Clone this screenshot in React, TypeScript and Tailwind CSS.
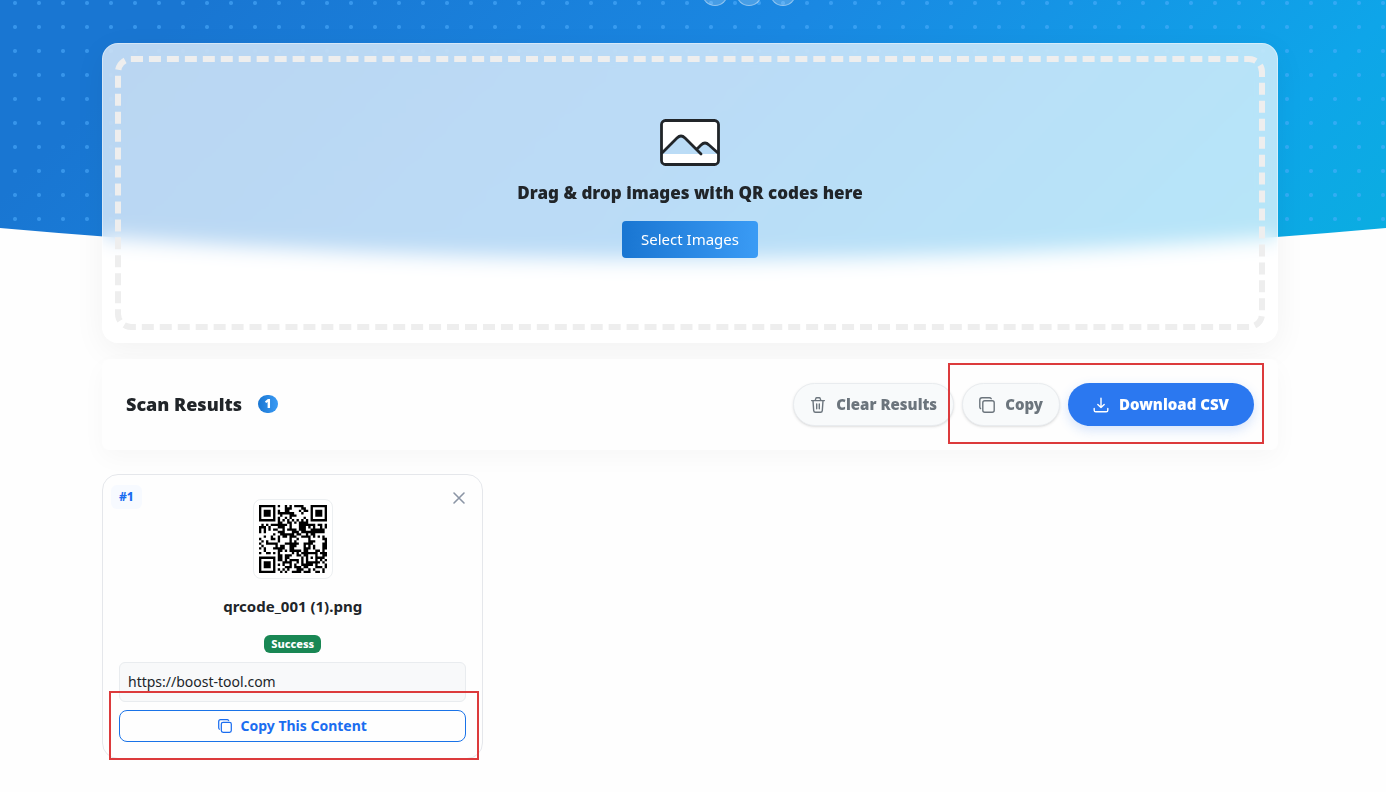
import React from 'react';

const QR_SIZE = 29;
const QR_MASK = 7;
const DATA_PER_BLOCK = 17;
const ECC_PER_BLOCK = 18;

const gfMul = (a: number, b: number) => {
    let r = 0;
    for (let i = 7; i >= 0; i--) {
        r = (r << 1) ^ ((r >> 7) * 0x11d);
        r ^= ((b >> i) & 1) * a;
    }
    return r;
};

const eccFor = (data: number[]) => {
    const gen: number[] = new Array(ECC_PER_BLOCK).fill(0);
    gen[ECC_PER_BLOCK - 1] = 1;
    let root = 1;
    for (let i = 0; i < ECC_PER_BLOCK; i++) {
        for (let j = 0; j < ECC_PER_BLOCK; j++) {
            gen[j] = gfMul(gen[j], root);
            if (j + 1 < ECC_PER_BLOCK) gen[j] ^= gen[j + 1];
        }
        root = gfMul(root, 2);
    }
    const rem: number[] = new Array(ECC_PER_BLOCK).fill(0);
    data.forEach((b) => {
        const factor = b ^ (rem.shift() ?? 0);
        rem.push(0);
        gen.forEach((g, i) => (rem[i] ^= gfMul(g, factor)));
    });
    return rem;
};

const isMasked = (x: number, y: number) => (((x + y) % 2) + ((x * y) % 3)) % 2 === 0;

// Version 3, level Q: two blocks, interleaved
const buildQr = (text: string) => {
    const bits: number[] = [];
    const push = (v: number, n: number) => {
        for (let i = n - 1; i >= 0; i--) bits.push((v >> i) & 1);
    };
    push(4, 4);
    push(text.length, 8);
    [...text].forEach((c) => push(c.charCodeAt(0), 8));
    push(0, 4);

    const bytes: number[] = [];
    for (let i = 0; i < bits.length; i += 8) bytes.push(parseInt(bits.slice(i, i + 8).join(''), 2));
    for (let pad = 0xec; bytes.length < DATA_PER_BLOCK * 2; pad ^= 0xec ^ 0x11) bytes.push(pad);
    const a = bytes.slice(0, DATA_PER_BLOCK);
    const b = bytes.slice(DATA_PER_BLOCK);
    const eccA = eccFor(a);
    const eccB = eccFor(b);
    const words = [...a.flatMap((v, i) => [v, b[i]]), ...eccA.flatMap((v, i) => [v, eccB[i]])];

    const grid: (boolean | null)[][] = Array.from({ length: QR_SIZE }, () => new Array(QR_SIZE).fill(null));
    const set = (x: number, y: number, v: boolean) => {
        if (x >= 0 && y >= 0 && x < QR_SIZE && y < QR_SIZE) grid[y][x] = v;
    };

    // timing, finder and alignment patterns
    for (let i = 0; i < QR_SIZE; i++) {
        set(6, i, i % 2 === 0);
        set(i, 6, i % 2 === 0);
    }
    [[3, 3], [QR_SIZE - 4, 3], [3, QR_SIZE - 4]].forEach(([cx, cy]) => {
        for (let dy = -4; dy <= 4; dy++) {
            for (let dx = -4; dx <= 4; dx++) {
                const d = Math.max(Math.abs(dx), Math.abs(dy));
                set(cx + dx, cy + dy, d !== 2 && d !== 4);
            }
        }
    });
    for (let dy = -2; dy <= 2; dy++) {
        for (let dx = -2; dx <= 2; dx++) set(22 + dx, 22 + dy, Math.max(Math.abs(dx), Math.abs(dy)) !== 1);
    }

    // format bits
    const info = (3 << 3) | QR_MASK;
    let rem = info;
    for (let i = 0; i < 10; i++) rem = (rem << 1) ^ ((rem >> 9) * 0x537);
    const format = ((info << 10) | rem) ^ 0x5412;
    const bit = (i: number) => ((format >> i) & 1) === 1;
    for (let i = 0; i < 6; i++) set(8, i, bit(i));
    set(8, 7, bit(6));
    set(8, 8, bit(7));
    set(7, 8, bit(8));
    for (let i = 9; i < 15; i++) set(14 - i, 8, bit(i));
    for (let i = 0; i < 8; i++) set(QR_SIZE - 1 - i, 8, bit(i));
    for (let i = 8; i < 15; i++) set(8, QR_SIZE - 15 + i, bit(i));
    set(8, QR_SIZE - 8, true);

    let n = 0;
    for (let right = QR_SIZE - 1; right >= 1; right -= 2) {
        if (right === 6) right = 5;
        for (let v = 0; v < QR_SIZE; v++) {
            for (let j = 0; j < 2; j++) {
                const x = right - j;
                const y = ((right + 1) & 2) === 0 ? QR_SIZE - 1 - v : v;
                if (grid[y][x] === null) {
                    const on = n < words.length * 8 && ((words[n >> 3] >> (7 - (n & 7))) & 1) === 1;
                    grid[y][x] = on !== isMasked(x, y);
                    n++;
                }
            }
        }
    }
    return grid.flatMap((row, y) => row.map((on, x) => (on ? `M${x} ${y}h1v1h-1z` : ''))).join('');
};

const QrImage: React.FC<{ text: string }> = ({ text }) => (
    <svg viewBox="0 0 29 29" className="w-full h-full" role="img" aria-label="QR">
        <path d={buildQr(text)} fill="#000" />
    </svg>
);

const CopyIcon: React.FC<{ className?: string }> = ({ className = 'w-4 h-4' }) => (
    <svg viewBox="0 0 16 16" className={className} fill="none" stroke="currentColor" strokeWidth="1.4" strokeLinecap="round">
        <rect x="3.8" y="3.8" width="11.4" height="11.4" rx="2" />
        <path d="M1.6 11.6C1 11.2.8 10.6.8 10V3C.8 1.8 1.8.8 3 .8h7.4c.8 0 1.4.3 1.8.9" />
    </svg>
);

const TrashIcon: React.FC = () => (
    <svg viewBox="0 0 16 16" className="w-4 h-4" fill="none" stroke="currentColor" strokeWidth="1.4" strokeLinecap="round" strokeLinejoin="round">
        <path d="M1.6 3.6h12.8M5.2 3.4l.6-1.8c.1-.5.5-.8 1-.8h2.4c.5 0 .9.3 1 .8l.6 1.8M3 3.8l.7 9.8c.1 1 .8 1.6 1.7 1.6h5.2c.9 0 1.6-.6 1.7-1.6l.7-9.8M6.7 7v4.8M9.3 7v4.8" />
    </svg>
);

const DownloadIcon: React.FC = () => (
    <svg viewBox="0 0 16 16" className="w-4 h-4" fill="none" stroke="currentColor" strokeWidth="1.4" strokeLinecap="round" strokeLinejoin="round">
        <path d="M8 1.2v9.4M4.8 7.4 8 10.6l3.2-3.2M1.2 11.4v1.8c0 .9.6 1.6 1.6 1.6h10.4c1 0 1.6-.7 1.6-1.6v-1.8" />
    </svg>
);

const PictureIcon: React.FC = () => (
    <svg viewBox="0 0 60 48" className="w-[60px] h-12" fill="none" stroke="#212529" strokeWidth="2.8" strokeLinecap="round" strokeLinejoin="round">
        <path d="M5 2h50a3.5 3.5 0 0 1 3.5 3.5V34L49 25.5q-4-3-8 0L37 30 24 18.5q-3-2-6 0L2 34V5.5A3.5 3.5 0 0 1 5 2z" fill="#fff" stroke="none" />
        <path d="M2 35h56v11H2z" fill="#fff" stroke="none" />
        <rect x="1.5" y="1.5" width="57" height="44" rx="4" />
        <path d="M2 34 17 19q4-4 8 0l16 16M37 30l4-4q4-4 8 0l9 8" />
    </svg>
);

const App: React.FC = () => {
    const content = 'https://boost-tool.com';

    return (
        <div className="relative min-h-screen overflow-hidden bg-[#fefefe] pr-1.5 text-[#212529] font-['Noto_Sans',sans-serif]">
            <div className="absolute inset-x-0 top-0 h-[260px] overflow-hidden bg-[linear-gradient(135deg,#1976d2_0%,#1976d2_12%,#1a88e2_50%,#0ea5e9_85%,#0aaee0_100%)]">
                <div className="absolute inset-0 bg-[radial-gradient(circle,rgba(80,175,255,0.55)_1.5px,transparent_2.5px)] bg-[length:24px_24px] bg-[position:3px_-9px]" />
                <div className="absolute -top-5 inset-x-0 flex justify-center gap-2 pl-28">
                    {[0, 1, 2].map((i) => (
                        <span key={i} className="w-[26px] h-[26px] rounded-full border border-white/40 bg-white/20" />
                    ))}
                </div>
                <svg viewBox="0 0 1386 32" preserveAspectRatio="none" className="absolute bottom-0 w-full h-8">
                    <path d="M0 0Q693 62 1386 0V32H0z" fill="#fefefe" />
                </svg>
            </div>

            <main className="max-w-[1176px] mx-auto pt-[43px] pb-8">
                <section className="rounded-2xl border border-white/40 bg-white/70 backdrop-blur-[10px] p-3 shadow-[0_8px_32px_rgba(0,0,0,0.05)]">
                    <div className="h-[274px] flex flex-col items-center rounded-2xl border-[6px] border-dashed border-[#eeeeee] pt-[57px]">
                        <PictureIcon />
                        <h2 className="mt-3 text-[17px] leading-7 font-black">Drag &amp; drop images with QR codes here</h2>
                        <button className="mt-3.5 h-[37px] px-[19px] rounded-sm bg-linear-to-r from-[#1976d2] to-[#3a9bf5] text-white text-[15px]">
                            Select Images
                        </button>
                    </div>
                </section>

                <section className="relative mt-4 h-[91px] flex items-center justify-between rounded-lg bg-[#fefefe] px-6 shadow-[0_8px_24px_rgba(0,0,0,0.03)]">
                    <div className="flex items-center gap-4 pb-0.5">
                        <h2 className="text-lg leading-6 font-black">Scan Results</h2>
                        <span className="w-5 h-[18px] flex items-center justify-center rounded-full bg-linear-to-r from-[#1976d2] to-[#3a9bf5] text-white text-xs font-black">1</span>
                    </div>
                    <div className="flex gap-2">
                        <button className="h-[43px] flex items-center gap-2.5 px-4 rounded-full border border-[#e9ecef] bg-[#f8fafb] text-[#6c757d] font-black text-[15px] shadow-sm">
                            <TrashIcon />
                            Clear Results
                        </button>
                        <button className="h-[43px] flex items-center gap-2.5 px-4 rounded-full border border-[#e9ecef] bg-[#f8fafb] text-[#6c757d] font-black text-[15px] shadow-sm">
                            <CopyIcon />
                            Copy
                        </button>
                        <button className="h-[43px] flex items-center gap-2.5 px-[25px] rounded-full bg-[#2b78f0] text-white font-black text-[15px] shadow-[0_4px_12px_rgba(43,120,240,0.2)]">
                            <DownloadIcon />
                            Download CSV
                        </button>
                    </div>
                    <div className="absolute top-1 right-3.5 w-[316px] h-[81px] border-2 border-[#dc3a3c] pointer-events-none" />
                </section>

                <section className="mt-6 grid grid-cols-3 gap-4">
                    <article className="relative flex flex-col items-center rounded-2xl border border-[#e5e7eb] bg-[#fefefe] px-4 pt-6 pb-4">
                        <span className="absolute left-2 top-2.5 px-2 py-1 rounded-md bg-[#f7faff] text-[#1a6df0] text-xs leading-4 font-extrabold">#1</span>
                        <button aria-label="Close" className="absolute right-4 top-4 w-3.5 h-3.5 text-[#8b95a5]">
                            <svg viewBox="0 0 14 14" stroke="currentColor" strokeWidth="1.6" strokeLinecap="round">
                                <path d="m2 2 10 10M12 2 2 12" />
                            </svg>
                        </button>
                        <div className="w-20 h-20 rounded-lg border border-[#eceff1] bg-white p-[5px]">
                            <QrImage text={content} />
                        </div>
                        <h3 className="mt-4 text-[15px] leading-[22px] font-bold">qrcode_001 (1).png</h3>
                        <span className="mt-[18px] h-[18px] px-[7px] rounded-md bg-[#198754] text-white text-[11px] leading-[18px] font-extrabold">Success</span>
                        <input
                            aria-label="Content"
                            readOnly
                            value={content}
                            className="mt-[9px] w-full h-10 px-2 pb-0.5 rounded-md border border-[#e9ecef] bg-[#f8f9fa] text-sm"
                        />
                        <button className="mt-2 w-full h-8 flex items-center justify-center gap-2 rounded-lg border border-[#1a73e8] text-[#1a6df0] text-sm font-bold">
                            <CopyIcon className="w-3.5 h-3.5" />
                            Copy This Content
                        </button>
                        <div className="absolute left-1.5 right-[3px] -bottom-0.5 h-[69px] border-2 border-[#dc3a3c] pointer-events-none" />
                    </article>
                </section>
            </main>
        </div>
    );
};

export default App;
